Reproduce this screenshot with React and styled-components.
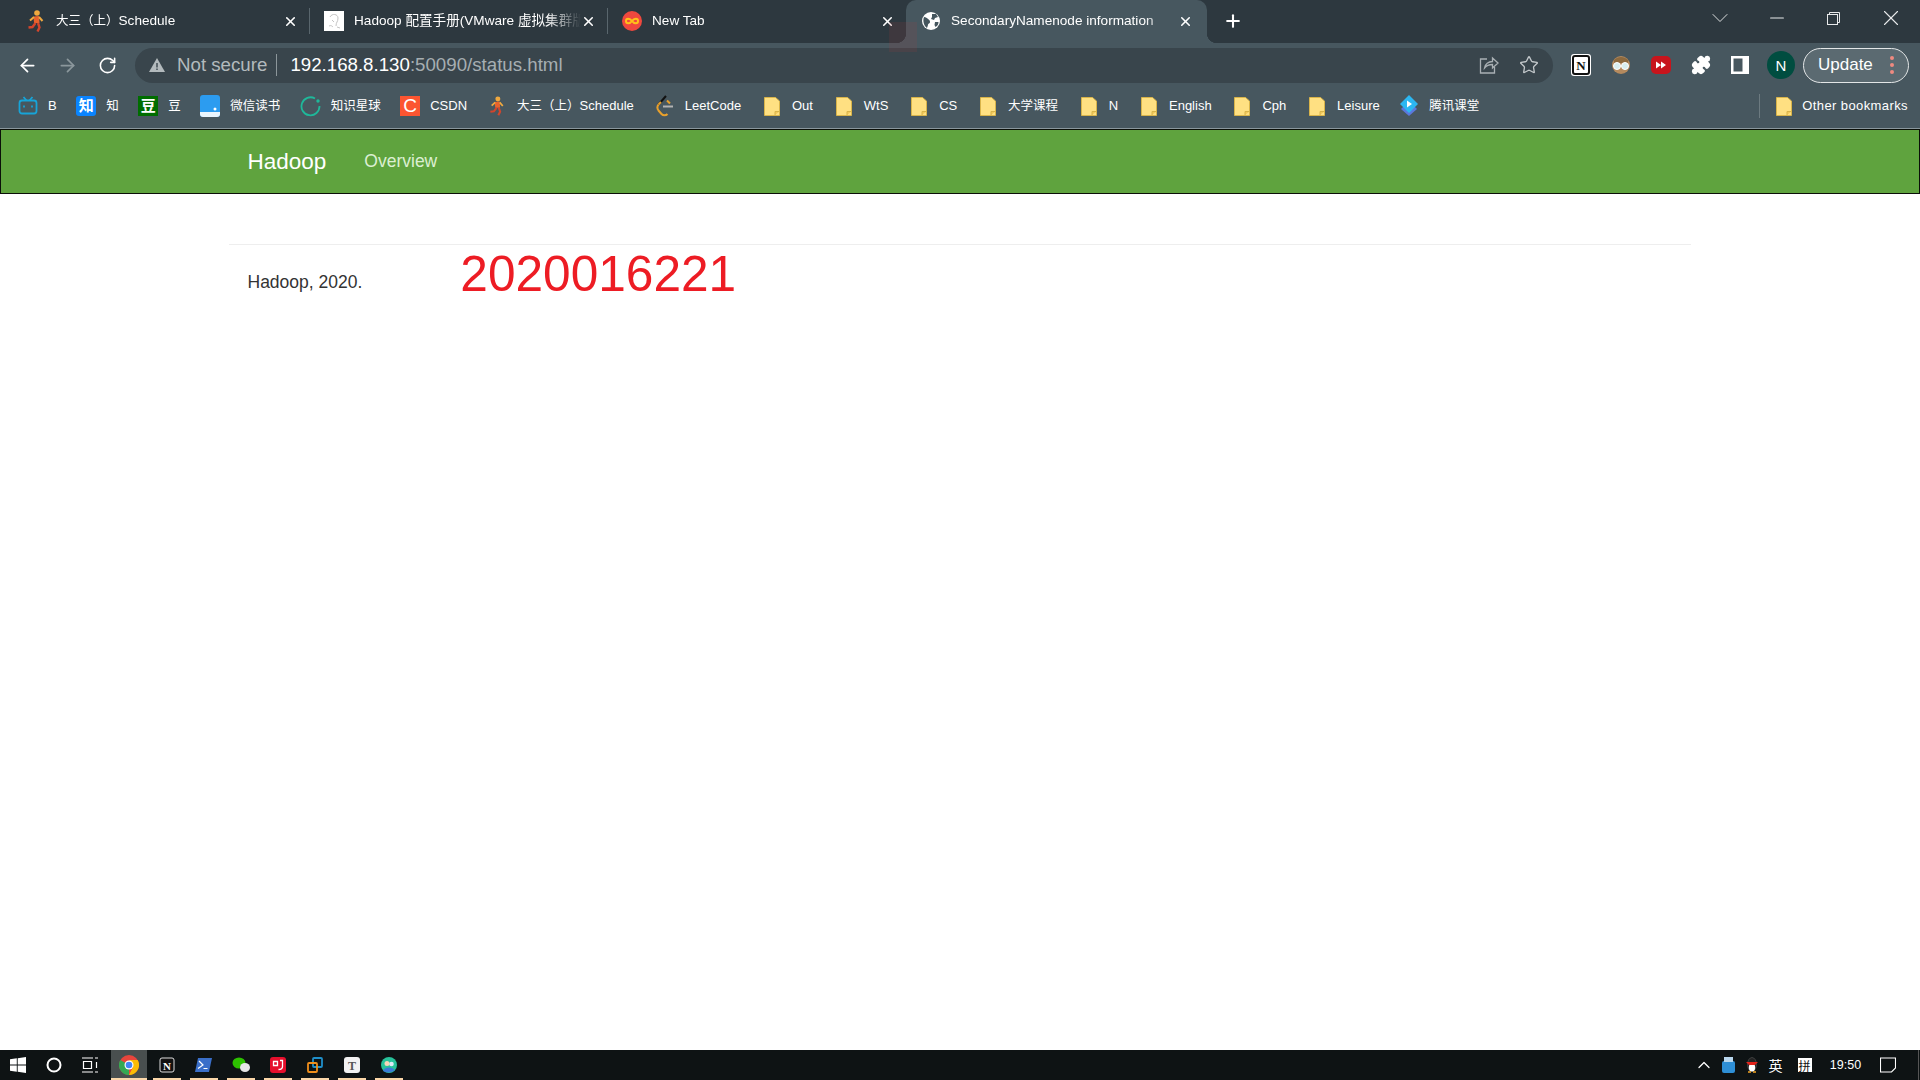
import React from "react";
import styled, { createGlobalStyle } from "styled-components";
import { ArrowLeft, ArrowRight, RotateCw, Star, X, Plus, Minus, ChevronDown, ChevronUp, Puzzle } from "lucide-react";

const GlobalStyle = createGlobalStyle`
  html, body {
    margin: 0;
    padding: 0;
    height: 100%;
    overflow: hidden;
    background: #fff;
    font-family: "Liberation Sans", "Noto Sans CJK SC", sans-serif;
  }
`;

const Runner = ({ w = 18, h = 22 }) => (
  <svg width={w} height={h} viewBox="0 0 18 22">
    <circle cx="10" cy="3" r="2.800" fill="#f0a93f" />
    <path d="M6.500 6.500 L12 6 L12.500 13 L7 13 Z" fill="#e8622c" />
    <path d="M7 7 L3 10.500 M12 7 L15.500 11" stroke="#f0a93f" strokeWidth="2" fill="none" />
    <path d="M8.500 13 L5.500 17 L1.500 17.500 M11 13 L12.500 17.500 L10.500 21.500" stroke="#d2452c" strokeWidth="2.400" fill="none" />
  </svg>
);

const Folder = () => (
  <svg width="16" height="19" viewBox="0 0 16 19">
    <path d="M.5.5h11l4 3.5v14.500H.5z" fill="#ffe082" stroke="#d9b44a" />
    <path d="M11 18v-3.500h4.500" fill="#f3c95c" stroke="#d9b44a" />
  </svg>
);

const BiliIcon = () => (
  <svg width="20" height="20" viewBox="0 0 20 20" fill="none" stroke="#17a4d8" strokeWidth="1.800">
    <rect x="1.500" y="4.500" width="17" height="13" rx="2.500" />
    <path d="M5.500 1l3 3.500M14.500 1l-3 3.500M6 9.500v2M14 9.500v2" />
  </svg>
);

const WeReadIcon = () => (
  <svg width="20" height="22" viewBox="0 0 20 22">
    <rect x="0" y="0" width="20" height="22" rx="3" fill="#2c9cf0" />
    <path d="M0 17h20v2a3 3 0 0 1-3 3H3a3 3 0 0 1-3-3z" fill="#eaf5fd" />
    <circle cx="15" cy="14" r="1.500" fill="#fff" />
  </svg>
);

const PlanetIcon = () => (
  <svg width="21" height="21" viewBox="0 0 21 21" fill="none" stroke="#1fb89a" strokeWidth="1.800">
    <path d="M15 2.500A9 9 0 1 0 19.500 10" />
    <circle cx="18" cy="5" r="0.800" fill="#1fb89a" />
  </svg>
);

const LeetIcon = () => (
  <svg width="18" height="22" viewBox="0 0 18 22" fill="none" strokeWidth="2">
    <path d="M10 1L2.500 9.500" stroke="#111" />
    <path d="M2.500 9.500a5 5 0 0 0 0 6l3 3.500a4 4 0 0 0 6 0" stroke="#e8a02c" />
    <path d="M5 7l-2.500 2.500M11 5.500l3 3" stroke="#e8a02c" />
    <path d="M7 11.500h10" stroke="#b3b3b3" />
  </svg>
);

const KetangIcon = () => (
  <svg width="20" height="22" viewBox="0 0 20 22">
    <path d="M10 6l8 8-8 7-8-7z" fill="#5b78dc" />
    <path d="M10 0l9 9-9 9-9-9z" fill="#2cb7f2" />
    <path d="M8 5.500l5 3.500-5 3.500z" fill="#fff" />
  </svg>
);

const HadoopFavicon = () => (
  <svg width="20" height="20" viewBox="0 0 20 20">
    <rect width="20" height="20" fill="#fff" />
    <path d="M6 6c2-4 8-3 8 1s-2 4-2 8M5 15c2-1 3 0 4 1M8 9l2 2M13 16l3 1" stroke="#c4c4c4" fill="none" />
  </svg>
);

const InfinityFavicon = () => (
  <svg width="20" height="20" viewBox="0 0 20 20">
    <circle cx="10" cy="10" r="10" fill="#f0483e" />
    <path d="M10 10c-2-3-6-3-6 0s4 3 6 0 6-3 6 0-4 3-6 0z" fill="none" stroke="#ffc21a" strokeWidth="2" />
  </svg>
);

const GlobeFavicon = () => (
  <svg width="20" height="20" viewBox="0 0 20 20">
    <circle cx="10" cy="10" r="9" fill="#fff" />
    <path d="M3 6c2 0 3 1 4 2s2 1 2 3-2 1-2 3l-1 3C3 15 1.500 10 3 6zM11 3h4l2 3-3 1-1 2-3-1 1-2zM14 11h3.500c0 2-1 4-3 5l-1-2z" fill="#45565e" />
  </svg>
);

const Page = styled.div`
  display: flex;
  flex-direction: column;
  height: 100vh;
  width: 1920px;
`;

const TabStrip = styled.div`
  display: flex;
  align-items: flex-start;
  height: 43px;
  padding-left: 12px;
  background: #2d383f;
  position: relative;
`;

const Tab = styled.div`
  display: flex;
  align-items: center;
  position: relative;
  box-sizing: border-box;
  width: ${(p) => (p.$active ? "301px" : "298px")};
  height: ${(p) => (p.$active ? "43px" : "26px")};
  margin-top: ${(p) => (p.$active ? "0" : "8px")};
  padding: ${(p) => (p.$active ? "0 14px 1px 15px" : "0 11px 0 14px")};
  background: ${(p) => (p.$active ? "#47575f" : "transparent")};
  border-radius: ${(p) => (p.$active ? "10px 10px 0 0" : "0")};
  border-right: ${(p) => (p.$sep ? "1px solid #59666d" : "none")};
  color: #fff;
  font-size: 13.600px;

  ${(p) =>
    p.$active &&
    `
    &::after {
      content: "";
      position: absolute;
      left: 100%;
      bottom: 0;
      width: 10px;
      height: 10px;
      background: radial-gradient(circle at 100% 0, #2d383f 10px, #47575f 10.500px);
    }
    &::before {
      content: "";
      position: absolute;
      right: 100%;
      bottom: 0;
      width: 10px;
      height: 10px;
      background: radial-gradient(circle at 0 0, #2d383f 10px, #47575f 10.500px);
    }
  `}
`;

const TabIcon = styled.span`
  display: flex;
  justify-content: center;
  flex: 0 0 20px;
  margin-right: 10px;
`;

const TabTitle = styled.span`
  flex: 1;
  overflow: hidden;
  white-space: nowrap;
  line-height: 16px;
  -webkit-mask-image: linear-gradient(to right, #000 85%, transparent);
  mask-image: linear-gradient(to right, #000 85%, transparent);
`;

const Han = styled.span`
  font-size: 12.500px;
`;

const NewTab = styled.span`
  display: flex;
  margin: 11px 0 0 16px;
  color: #fff;
`;

const WindowButtons = styled.div`
  display: flex;
  align-items: center;
  margin-left: auto;
  padding-right: 1px;
  height: 36px;
  color: #e8eaeb;
`;

const WindowButton = styled.span`
  display: flex;
  justify-content: center;
  width: 57px;
`;

const RestoreIcon = () => (
  <svg width="13" height="13" viewBox="0 0 13 13" fill="none" stroke="#e8eaeb">
    <rect x="0.500" y="2.500" width="10" height="10" />
    <path d="M2.500 2.500v-2h10v10h-2" />
  </svg>
);

const LensBadge = styled.div`
  position: absolute;
  left: 889px;
  top: 22px;
  width: 28px;
  height: 30px;
  background: rgba(190, 60, 60, 0.12);
  z-index: 2;
`;

const Toolbar = styled.div`
  display: flex;
  align-items: center;
  height: 44px;
  padding: 0 11px 0 7px;
  background: #47575f;
  color: #fff;
`;

const NavButton = styled.span`
  display: flex;
  justify-content: center;
  width: 40px;
  color: ${(p) => (p.$off ? "#8b979c" : "#fff")};
`;

const Omnibox = styled.div`
  display: flex;
  align-items: center;
  box-sizing: border-box;
  flex: 0 0 1418px;
  height: 35px;
  margin-left: 8px;
  padding: 0 14px;
  border-radius: 18px;
  background: #39454c;
  font-size: 18.700px;
`;

const NotSecure = styled.span`
  color: #b3babd;
  margin-left: 12px;
  padding-right: 9px;
  margin-right: 13px;
  border-right: 1px solid #8c969a;
  line-height: 22px;
`;

const Host = styled.span`
  color: #fff;
`;

const Rest = styled.span`
  color: #a6aeb2;
`;

const OmniActions = styled.div`
  display: flex;
  align-items: center;
  gap: 20px;
  margin-left: auto;
  color: #c2c7ca;
`;

const Extensions = styled.div`
  display: flex;
  align-items: center;
  gap: 20px;
  margin-left: 18px;
`;

const Avatar = styled.span`
  display: flex;
  align-items: center;
  justify-content: center;
  width: 28px;
  height: 28px;
  border-radius: 50%;
  margin-left: -2px;
  background: #004d40;
  color: #fff;
  font-size: 15px;
`;

const UpdateButton = styled.span`
  display: flex;
  align-items: center;
  box-sizing: border-box;
  width: 106px;
  height: 35px;
  margin-left: 8px;
  padding-left: 14px;
  border: 1px solid #e3e6e7;
  border-radius: 18px;
  background: #5b6a71;
  color: #fff;
  font-size: 17px;
`;

const Dots = styled.span`
  display: flex;
  flex-direction: column;
  gap: 3px;
  margin-left: 17px;
`;

const Dot = styled.i`
  display: block;
  width: 4px;
  height: 4px;
  border-radius: 50%;
  background: #ef8a80;
`;

const BookmarkBar = styled.div`
  display: flex;
  align-items: center;
  gap: 19.500px;
  height: 42px;
  box-sizing: border-box;
  padding: 0 12px 3px 18px;
  background: #47575f;
  border-bottom: 1px solid #8a979d;
  color: #fff;
  font-size: 13px;
`;

const Bookmark = styled.span`
  display: flex;
  align-items: center;
  gap: ${(p) => p.$gap || 10}px;
  white-space: nowrap;
  line-height: 16px;
  margin-left: ${(p) => p.$shift || 0}px;
  font-size: ${(p) => (p.$han ? "12.500px" : "13px")};
`;

const FolderMark = styled(Bookmark)`
  gap: 12px;
  margin-left: 3.300px;
`;

const LetterIcon = styled.span`
  display: flex;
  align-items: center;
  justify-content: center;
  width: 20px;
  height: 20px;
  border-radius: ${(p) => p.$radius || "0"};
  background: ${(p) => p.$bg};
  color: #fff;
  font-size: ${(p) => p.$size || 15}px;
  font-weight: ${(p) => p.$weight || 700};
`;

const OtherBookmarks = styled(Bookmark)`
  margin-left: auto;
  padding-left: 16px;
  border-left: 1px solid #6c7a80;
  height: 24px;
  letter-spacing: 0.400px;
`;

const HadoopNav = styled.nav`
  box-sizing: border-box;
  height: 65px;
  border: 1px solid #0b0f08;
  background: #5fa33e;
`;

const NavContainer = styled.div`
  display: flex;
  align-items: center;
  height: 100%;
  width: 1462.500px;
  margin: 0 auto;
  padding: 0 18.750px;
  box-sizing: border-box;
`;

const Brand = styled.a`
  color: #fff;
  font-size: 22.500px;
`;

const NavLink = styled.a`
  margin-left: 38px;
  color: #dcefd2;
  font-size: 17.500px;
`;

const Content = styled.main`
  flex: 1;
  background: #fff;
`;

const FooterBox = styled.div`
  width: 1462.500px;
  margin: 50px auto 0;
  border-top: 1px solid #eee;
  display: flex;
  align-items: flex-start;
  padding-left: 18.750px;
  box-sizing: border-box;
`;

const FooterText = styled.p`
  margin: 25px 0 0;
  color: #333;
  font-size: 17.500px;
  line-height: 24px;
`;

const StudentId = styled.span`
  margin: 1px 0 0 98px;
  color: #ed1c24;
  font-size: 49.600px;
  line-height: 56px;
`;

const Taskbar = styled.div`
  display: flex;
  align-items: center;
  flex: 0 0 30px;
  background: #0e1314;
  color: #fff;
`;

const SystemButton = styled.span`
  display: flex;
  align-items: center;
  justify-content: center;
  width: 36px;
`;

const TaskApp = styled.span`
  display: flex;
  align-items: center;
  justify-content: center;
  position: relative;
  width: ${(p) => (p.$active ? "36px" : "37px")};
  height: 30px;
  margin: ${(p) => (p.$active ? "0 1px 0 3px" : "0")};
  background: ${(p) => (p.$active ? "#494f4f" : "transparent")};

  &::after {
    content: "";
    position: absolute;
    bottom: 0;
    left: ${(p) => (p.$active ? "0" : "4.500px")};
    right: ${(p) => (p.$active ? "0" : "4.500px")};
    height: 2px;
    background: #fbd7a9;
  }
`;

const Tray = styled.div`
  display: flex;
  align-items: center;
  margin-left: auto;
  font-size: 14px;
`;

const TraySlot = styled.span`
  display: flex;
  align-items: center;
  justify-content: center;
  width: ${(p) => p.$w || 24}px;
  color: #fff;
`;

const ImeBox = styled.span`
  display: flex;
  align-items: center;
  justify-content: center;
  width: 14px;
  height: 14px;
  background: #fff;
  color: #111;
  font-size: 12px;
`;

const Clock = styled.span`
  font-size: 12.500px;
`;

const EndEdge = styled.span`
  width: 1px;
  height: 30px;
  margin: 0 1px 0 12px;
  background: #555;
`;

const tabs = [
  {
    icon: <Runner />,
    title: (
      <>
        <Han>大三（上）</Han>Schedule
      </>
    ),
    key: "schedule",
    sep: true,
  },
  { icon: <HadoopFavicon />, title: "Hadoop 配置手册(VMware 虚拟集群版)", key: "hadoop", sep: true },
  { icon: <InfinityFavicon />, title: "New Tab", key: "new" },
  { icon: <GlobeFavicon />, title: "SecondaryNamenode information", key: "snn", active: true },
];

const folders = ["Out", "WtS", "CS", "大学课程", "N", "English", "Cph", "Leisure"];

const App = () => {
  return (
    <Page>
      <GlobalStyle />
      <TabStrip>
        {tabs.map((tab) => (
          <Tab key={tab.key} $active={tab.active} $sep={tab.sep}>
            <TabIcon>{tab.icon}</TabIcon>
            <TabTitle>{tab.title}</TabTitle>
            <X size={15} strokeWidth={2.5} />
          </Tab>
        ))}
        <NewTab>
          <Plus size={20} strokeWidth={2.5} />
        </NewTab>
        <LensBadge />
        <WindowButtons>
          <WindowButton>
            <ChevronDown size={28} strokeWidth={0.8} />
          </WindowButton>
          <WindowButton>
            <Minus size={22} strokeWidth={1.1} />
          </WindowButton>
          <WindowButton>
            <RestoreIcon />
          </WindowButton>
          <WindowButton>
            <X size={26} strokeWidth={1} />
          </WindowButton>
        </WindowButtons>
      </TabStrip>

      <Toolbar>
        <NavButton>
          <ArrowLeft size={21} strokeWidth={2} />
        </NavButton>
        <NavButton $off>
          <ArrowRight size={21} strokeWidth={2} />
        </NavButton>
        <NavButton>
          <RotateCw size={19} strokeWidth={2} />
        </NavButton>
        <Omnibox>
          <svg width="16" height="14" viewBox="0 0 16 14">
            <path d="M8 0l8 14H0z" fill="#b3babd" />
            <path d="M7.300 5h1.400v4.500H7.300zM7.300 10.500h1.400V12H7.300z" fill="#39454c" />
          </svg>
          <NotSecure>Not secure</NotSecure>
          <Host>192.168.8.130</Host>
          <Rest>:50090/status.html</Rest>
          <OmniActions>
            <svg width="20" height="20" viewBox="0 0 20 20" fill="none" stroke="#a9b0b4" strokeWidth="1.300">
              <path d="M8 4H1.500v14h14v-6" />
              <path d="M5.500 13c.5-4 4-6.500 8-6.500V3l5.500 5-5.500 5V9.500c-3 0-6 1-8 3.500z" />
            </svg>
            <Star size={20} strokeWidth={1.600} />
          </OmniActions>
        </Omnibox>
        <Extensions>
          <svg width="20" height="22" viewBox="0 0 20 22">
            <rect x="0" y="0" width="20" height="22" rx="3" fill="#fff" />
            <rect x="2" y="2" width="16" height="18" rx="2" fill="#fff" stroke="#111" strokeWidth="2" />
            <text x="10" y="16" textAnchor="middle" fontSize="13" fontWeight="700" fontFamily="Liberation Serif, serif" fill="#111">N</text>
          </svg>
          <svg width="20" height="20" viewBox="0 0 20 20">
            <circle cx="10" cy="10" r="9" fill="#b58a5e" />
            <path d="M3 5c4-4 10-4 14 0v3H3z" fill="#8d6a3f" />
            <circle cx="6" cy="11" r="3.500" fill="#d8eef0" stroke="#fff" />
            <circle cx="14" cy="11" r="3.500" fill="#d8eef0" stroke="#fff" />
          </svg>
          <svg width="20" height="18" viewBox="0 0 20 18">
            <rect width="20" height="18" rx="5" fill="#c8141c" />
            <path d="M5 5.500l5 3.500-5 3.500zM10 5.500l5 3.500-5 3.500z" fill="#fff" />
          </svg>
          <Puzzle size={20} fill="#fff" stroke="#fff" />
          <svg width="18" height="20" viewBox="0 0 18 20">
            <path d="M0 1h18v18H0z" fill="#fff" />
            <path d="M2.500 3.500h9v13h-9z" fill="#47575f" />
          </svg>
          <Avatar>N</Avatar>
        </Extensions>
        <UpdateButton>
          Update
          <Dots>
            <Dot />
            <Dot />
            <Dot />
          </Dots>
        </UpdateButton>
      </Toolbar>

      <BookmarkBar>
        <Bookmark>
          <BiliIcon />B
        </Bookmark>
        <Bookmark $han>
          <LetterIcon $bg="#0a84ff" $radius="3px">知</LetterIcon>知
        </Bookmark>
        <Bookmark $han>
          <LetterIcon $bg="#006d00">豆</LetterIcon>豆
        </Bookmark>
        <Bookmark $han>
          <WeReadIcon />微信读书
        </Bookmark>
        <Bookmark $han>
          <PlanetIcon />知识星球
        </Bookmark>
        <Bookmark>
          <LetterIcon $bg="#fc5531" $size={19} $weight={400}>C</LetterIcon>CSDN
        </Bookmark>
        <Bookmark $gap={12} $shift={2.5}>
          <Runner w={16} h={20} />
          <span>
            <Han>大三（上）</Han>Schedule
          </span>
        </Bookmark>
        <Bookmark $gap={11} $shift={2.5}>
          <LeetIcon />LeetCode
        </Bookmark>
        {folders.map((name) => (
          <FolderMark key={name} $han={name === "大学课程"}>
            <Folder />
            {name}
          </FolderMark>
        ))}
        <Bookmark $han>
          <KetangIcon />腾讯课堂
        </Bookmark>
        <OtherBookmarks>
          <Folder />
          Other bookmarks
        </OtherBookmarks>
      </BookmarkBar>

      <HadoopNav>
        <NavContainer>
          <Brand>Hadoop</Brand>
          <NavLink>Overview</NavLink>
        </NavContainer>
      </HadoopNav>

      <Content>
        <FooterBox>
          <FooterText>Hadoop, 2020.</FooterText>
          <StudentId>2020016221</StudentId>
        </FooterBox>
      </Content>

      <Taskbar>
        <SystemButton>
          <svg width="16" height="16" viewBox="0 0 16 16" fill="#fff">
            <path d="M0 2.300l6.800-1v6.200H0zM7.700 1.200L16 0v7.500H7.700zM0 8.500h6.800v6.200l-6.800-1zM7.700 8.500H16V16l-8.300-1.200z" />
          </svg>
        </SystemButton>
        <SystemButton>
          <svg width="16" height="16" viewBox="0 0 16 16" fill="none" stroke="#fff" strokeWidth="2">
            <circle cx="8" cy="8" r="6.500" />
          </svg>
        </SystemButton>
        <SystemButton>
          <svg width="16" height="16" viewBox="0 0 16 16" fill="none" stroke="#fff" strokeWidth="1.200">
            <path d="M0 1h11M0 15h11M1.500 4.500h8v7h-8zM13 1h3M13 15h3M14.500 5v6" />
          </svg>
        </SystemButton>
        <TaskApp $active>
          <svg width="20" height="20" viewBox="0 0 20 20">
            <circle cx="10" cy="10" r="10" fill="#e8453c" />
            <path d="M10 10L1.300 5A10 10 0 0 0 10 20z" fill="#34a853" />
            <path d="M10 5h8.700A10 10 0 0 1 10 20l4-8z" fill="#fbbc05" />
            <circle cx="10" cy="10" r="4.500" fill="#fff" />
            <circle cx="10" cy="10" r="3.300" fill="#4285f4" />
          </svg>
        </TaskApp>
        <TaskApp>
          <svg width="16" height="16" viewBox="0 0 16 16">
            <rect x="1" y="1" width="14" height="14" rx="2" fill="#111" stroke="#ddd" />
            <text x="8" y="12.500" textAnchor="middle" fontSize="11" fontWeight="700" fontFamily="Liberation Serif, serif" fill="#fff">N</text>
          </svg>
        </TaskApp>
        <TaskApp>
          <svg width="17" height="14" viewBox="0 0 17 14">
            <path d="M3 0h14l-3 14H0z" fill="#3a6fc9" />
            <path d="M4 3l4 4-5 3.500M8.500 10.500h4" stroke="#fff" strokeWidth="1.200" fill="none" />
          </svg>
        </TaskApp>
        <TaskApp>
          <svg width="18" height="16" viewBox="0 0 18 16">
            <ellipse cx="7" cy="6" rx="6.500" ry="5.500" fill="#2dc100" />
            <ellipse cx="13" cy="10.500" rx="5" ry="4.500" fill="#e6e6e6" />
          </svg>
        </TaskApp>
        <TaskApp>
          <svg width="16" height="16" viewBox="0 0 16 16">
            <rect width="16" height="16" rx="3" fill="#e60f2c" />
            <path d="M3.500 4.500h4v4h-4zM10 3.500h2.500v6c0 2-1.500 3-4 3" stroke="#fff" strokeWidth="1.300" fill="none" />
          </svg>
        </TaskApp>
        <TaskApp>
          <svg width="16" height="16" viewBox="0 0 16 16" fill="none" strokeWidth="1.800">
            <rect x="6" y="1" width="9" height="9" rx="1" stroke="#1f8fc9" />
            <rect x="1" y="6" width="9" height="9" rx="1" stroke="#ef8f1c" />
          </svg>
        </TaskApp>
        <TaskApp>
          <svg width="16" height="16" viewBox="0 0 16 16">
            <rect width="16" height="16" rx="3" fill="#f2f2f2" />
            <text x="8" y="12.500" textAnchor="middle" fontSize="12" fontWeight="700" fontFamily="Liberation Serif, serif" fill="#555">T</text>
          </svg>
        </TaskApp>
        <TaskApp>
          <svg width="16" height="16" viewBox="0 0 16 16">
            <circle cx="8" cy="8" r="8" fill="#27c29a" />
            <circle cx="6" cy="6.500" r="2.500" fill="#f5d6b8" />
            <circle cx="10.500" cy="7" r="2.300" fill="#dfe9f5" />
            <path d="M2 14c1-4 8-5 12-1-3 3-9 3-12 1z" fill="#3a7bd5" />
          </svg>
        </TaskApp>
        <Tray>
          <TraySlot>
            <ChevronUp size={20} strokeWidth={1.500} />
          </TraySlot>
          <TraySlot>
            <svg width="13" height="16" viewBox="0 0 13 16">
              <rect y="4" width="13" height="12" rx="2" fill="#2e8fd6" />
              <rect x="2" width="9" height="5" fill="#b9d7ee" />
            </svg>
          </TraySlot>
          <TraySlot>
            <svg width="14" height="16" viewBox="0 0 14 16">
              <ellipse cx="7" cy="7.500" rx="4.500" ry="7" fill="#222" stroke="#666" strokeWidth="0.500" />
              <ellipse cx="7" cy="10.500" rx="3.200" ry="4" fill="#fff" />
              <path d="M1 5h12l-3 3H4z" fill="#e2231a" />
              <path d="M3 15h3M8 15h3" stroke="#f5a623" strokeWidth="1.500" />
            </svg>
          </TraySlot>
          <TraySlot $w={23}>英</TraySlot>
          <TraySlot $w={35}>
            <ImeBox>拼</ImeBox>
          </TraySlot>
          <TraySlot $w={47}>
            <Clock>19:50</Clock>
          </TraySlot>
          <TraySlot $w={37}>
            <svg width="16" height="16" viewBox="0 0 16 16" fill="none" stroke="#fff" strokeWidth="1.100">
              <path d="M.5 1h15v10l-4 4H.5z" />
            </svg>
          </TraySlot>
          <EndEdge />
        </Tray>
      </Taskbar>
    </Page>
  );
};

export default App;
